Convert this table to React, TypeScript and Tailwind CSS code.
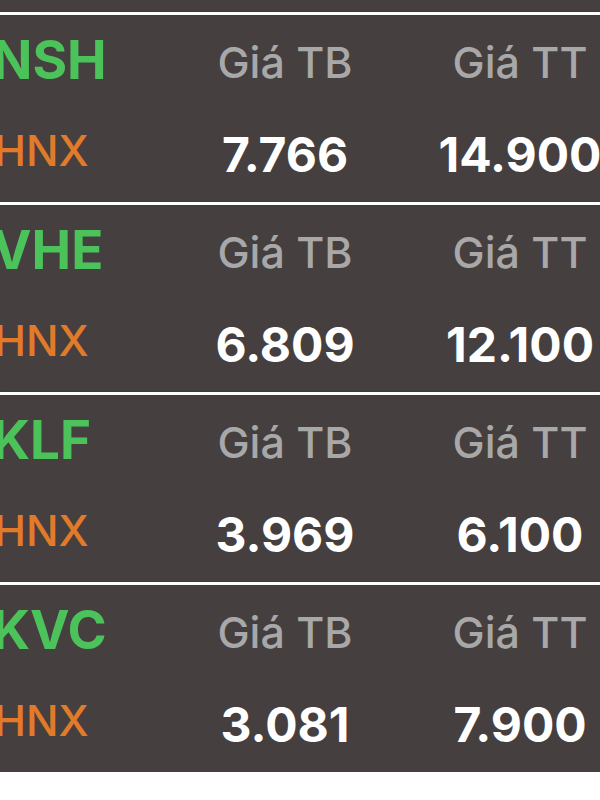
import React from "react";

type Holding = {
  symbol: string;
  exchange: string;
  avgPrice: string;
  marketPrice: string;
};

const holdings: Holding[] = [
  { symbol: "NSH", exchange: "HNX", avgPrice: "7.766", marketPrice: "14.900" },
  { symbol: "VHE", exchange: "HNX", avgPrice: "6.809", marketPrice: "12.100" },
  { symbol: "KLF", exchange: "HNX", avgPrice: "3.969", marketPrice: "6.100" },
  { symbol: "KVC", exchange: "HNX", avgPrice: "3.081", marketPrice: "7.900" },
];

const HoldingRow: React.FC<Holding> = ({ symbol, exchange, avgPrice, marketPrice }) => {
  return (
    <>
      <div className="h-[3px] bg-white shadow-[0_0_1px_#222]" />
      <div className="grid h-[187px] grid-cols-[170px_230px_240px]">
        <div className="-ml-[8px] flex flex-col">
          <span className="pt-[19px] text-[53px] font-bold leading-none text-[#4cc35a]">
            {symbol}
          </span>
          <span className="ml-[2px] mt-[42px] text-[43px] font-medium leading-none text-[#e17b2a]">
            {exchange}
          </span>
        </div>
        <div className="flex flex-col items-center">
          <span className="pt-[26px] text-[43px] font-medium leading-none text-[#a8a8a8]">
            Giá TB
          </span>
          <span className="mt-[47px] text-[48px] font-bold leading-none text-white">
            {avgPrice}
          </span>
        </div>
        <div className="flex flex-col items-center">
          <span className="pt-[26px] text-[43px] font-medium leading-none text-[#a8a8a8]">
            Giá TT
          </span>
          <span className="mt-[47px] text-[48px] font-bold leading-none text-white">
            {marketPrice}
          </span>
        </div>
      </div>
    </>
  );
};

export default function App() {
  return (
    <div className="h-[800px] w-[600px] overflow-hidden bg-white font-['Inter',sans-serif]">
      <div className="overflow-hidden bg-[#453f40]">
        <div className="h-[12px]" />
        {holdings.map((h) => (
          <HoldingRow key={h.symbol} {...h} />
        ))}
      </div>
    </div>
  );
}
